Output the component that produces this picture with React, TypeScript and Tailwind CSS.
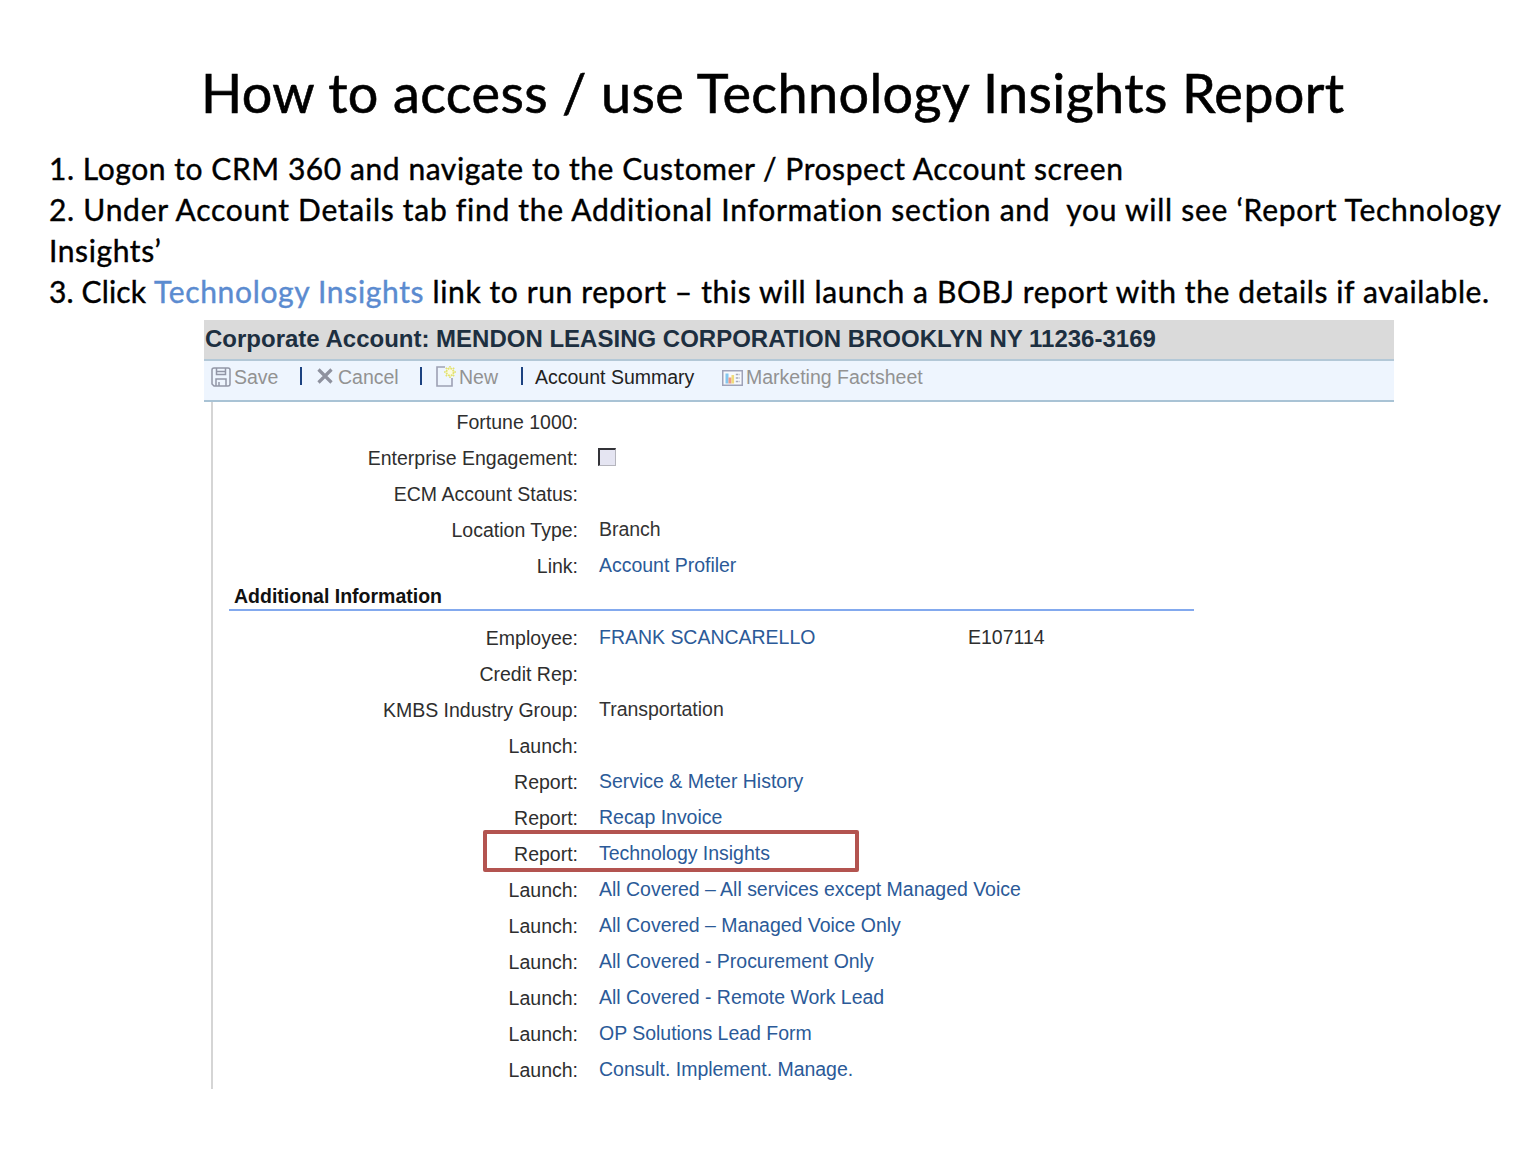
import React from 'react';

type Row = { label: string; value?: string; link?: boolean; extra?: string; checkbox?: boolean; marked?: boolean };

const details: Row[] = [
  { label: 'Fortune 1000:' },
  { label: 'Enterprise Engagement:', checkbox: true },
  { label: 'ECM Account Status:' },
  { label: 'Location Type:', value: 'Branch' },
  { label: 'Link:', value: 'Account Profiler', link: true },
];

const additional: Row[] = [
  { label: 'Employee:', value: 'FRANK SCANCARELLO', link: true, extra: 'E107114' },
  { label: 'Credit Rep:' },
  { label: 'KMBS Industry Group:', value: 'Transportation' },
  { label: 'Launch:' },
  { label: 'Report:', value: 'Service & Meter History', link: true },
  { label: 'Report:', value: 'Recap Invoice', link: true },
  { label: 'Report:', value: 'Technology Insights', link: true, marked: true },
  { label: 'Launch:', value: 'All Covered – All services except Managed Voice', link: true },
  { label: 'Launch:', value: 'All Covered – Managed Voice Only', link: true },
  { label: 'Launch:', value: 'All Covered - Procurement Only', link: true },
  { label: 'Launch:', value: 'All Covered - Remote Work Lead', link: true },
  { label: 'Launch:', value: 'OP Solutions Lead Form', link: true },
  { label: 'Launch:', value: 'Consult. Implement. Manage.', link: true },
];

function FormRow({ row }: { row: Row }) {
  return (
    <div className="relative flex h-9 items-center">
      <div className="w-[365px] pt-px text-right text-[#2e2e2e]">{row.label}</div>
      <div className={row.link ? 'ml-[21px] w-[369px] -mt-px tracking-[-0.02px] text-[#2b5a98]' : 'ml-[21px] w-[369px] -mt-px tracking-[-0.02px] text-[#333333]'}>
        {row.checkbox ? (
          <span className="-ml-px block h-[18px] w-[18px] border-t-2 border-l-2 border-r border-b border-t-[#333338] border-l-[#333338] border-r-[#b5b5bd] border-b-[#b5b5bd] bg-[#e5e5f2]" />
        ) : (
          row.value
        )}
      </div>
      {row.extra && <div className="-mt-px text-[#2e2e2e]">{row.extra}</div>}
      {row.marked && <div className="absolute -top-[5px] left-[270px] h-[42px] w-[376px] rounded-[2px] border-4 border-[#b35450]" />}
    </div>
  );
}

function SaveIcon() {
  return (
    <svg className="h-5 w-5 shrink-0" viewBox="0 0 20 20" fill="none" stroke="#9296a6" strokeWidth="1.5">
      <path d="M3 1H17Q19 1 19 3V17Q19 19 17 19H3L1 17V3Q1 1 3 1Z" />
      <path d="M5.5 1V7.5H14.5V1M5 19V12H15V19M8 15V19M5.5 4.5H14.5" />
    </svg>
  );
}

function CancelIcon() {
  return (
    <svg className="h-4 w-4 shrink-0" viewBox="0 0 16 16" stroke="#8e919e" strokeWidth="3.2">
      <path d="M1.5 1.5L14.5 14.5M14.5 1.5L1.5 14.5" />
    </svg>
  );
}

function NewIcon() {
  return (
    <svg className="h-[21px] w-[21px] shrink-0" viewBox="0 0 21 21" fill="none">
      <path d="M9 1H1V20H16V12" stroke="#9da1b4" strokeWidth="1.6" />
      <circle cx="14" cy="6" r="3.6" fill="#fbfbe2" stroke="#e4e26f" strokeWidth="1.8" strokeDasharray="2 0.8" />
      <path d="M14 0V1.6M14 10.4V12M8 6H9.6M18.4 6H20M9.8 1.8L10.9 2.9M17.1 9.1L18.2 10.2M18.2 1.8L17.1 2.9M10.9 9.1L9.8 10.2" stroke="#e4e26f" strokeWidth="1.6" />
    </svg>
  );
}

function FactsheetIcon() {
  return (
    <svg className="h-4 w-[21px] shrink-0" viewBox="0 0 21 16" fill="none">
      <rect x="0.75" y="0.75" width="19.5" height="14.5" fill="#f7f9fd" stroke="#9ea2b8" strokeWidth="1.5" />
      <rect x="3.5" y="3.5" width="3" height="10" fill="#84c6ee" />
      <rect x="6.5" y="7.5" width="3" height="6" fill="#ee9b87" />
      <rect x="9.5" y="5" width="2.6" height="8.5" fill="#f0dc7b" />
      <path d="M13.8 4.5H17.5M13.8 8H17.5M13.8 11.5H17.5" stroke="#a5a8b8" strokeWidth="1.3" strokeDasharray="2.4 0.6" />
    </svg>
  );
}

const Bar = () => <span className="mb-[3px] h-[18px] w-0.5 shrink-0 bg-[#1c4280]" />;

export default function App() {
  return (
    <div className="h-[1152px] w-[1535px] overflow-hidden bg-white">
      <h1 className="ml-[201px] pt-[60px] font-['Lato',sans-serif] text-[54px] leading-[66px] font-normal tracking-[0.37px] whitespace-nowrap text-black [-webkit-text-stroke:0.6px]">
        How to access / use Technology Insights Report
      </h1>
      <div className="mt-[22px] ml-[49px] font-['Lato',sans-serif] text-[30px] leading-[41px] whitespace-pre text-black [-webkit-text-stroke:0.4px]">
        <p className="tracking-[0.56px]">1. Logon to CRM 360 and navigate to the Customer / Prospect Account screen</p>
        <p className="tracking-[0.72px]">{'2. Under Account Details tab find the Additional Information section and  you will see ‘Report Technology'}</p>
        <p className="tracking-[0.6px]">Insights’</p>
        <p className="tracking-[0.61px]">
          <span className="tracking-[0.14px]">3. Click </span>
          <span className="tracking-[0.66px] text-[#5b8bd0]">Technology Insights</span> link to run report – this will launch a BOBJ report with the details if available.
        </p>
      </div>
      <main className="mt-[8px] ml-[204px] w-[1190px] font-['Liberation_Sans',Arial,sans-serif] text-[19.5px] leading-6 whitespace-nowrap">
        <header className="h-[41px] border-b-2 border-[#b3c8d7] bg-[#dadada] pl-px text-[24px] leading-[38px] font-bold text-[#1d2f40]">
          Corporate Account: MENDON LEASING CORPORATION BROOKLYN NY 11236-3169
        </header>
        <nav className="flex h-[41px] items-center border-b-2 border-[#a9c3d5] bg-[#eef5fe] pb-[7px] pl-[7px] text-[#929292]">
          <SaveIcon />
          <span className="ml-[3px] w-[66px]">Save</span>
          <Bar />
          <span className="mb-0.5 ml-[15px] flex"><CancelIcon /></span>
          <span className="ml-[5px] w-[82px]">Cancel</span>
          <Bar />
          <span className="mb-0.5 ml-[14px] flex"><NewIcon /></span>
          <span className="ml-0.5 w-[62px]">New</span>
          <Bar />
          <span className="ml-3 w-[187px] text-[#222222]">Account Summary</span>
          <span className="mt-px flex"><FactsheetIcon /></span>
          <span className="ml-[3px]">Marketing Factsheet</span>
        </nav>
        <section className="ml-[7px] h-[687px] border-l-2 border-[#d5d5d5] pt-px">
          {details.map((row) => <FormRow key={row.label} row={row} />)}
          <div className="h-9 pt-0.5 pl-4">
            <h2 className="h-[26px] w-[965px] border-b-2 border-[#83a9ee] pl-[5px] leading-[23px] font-bold text-[#111111]">Additional Information</h2>
          </div>
          {additional.map((row, i) => <FormRow key={i} row={row} />)}
        </section>
      </main>
    </div>
  );
}
